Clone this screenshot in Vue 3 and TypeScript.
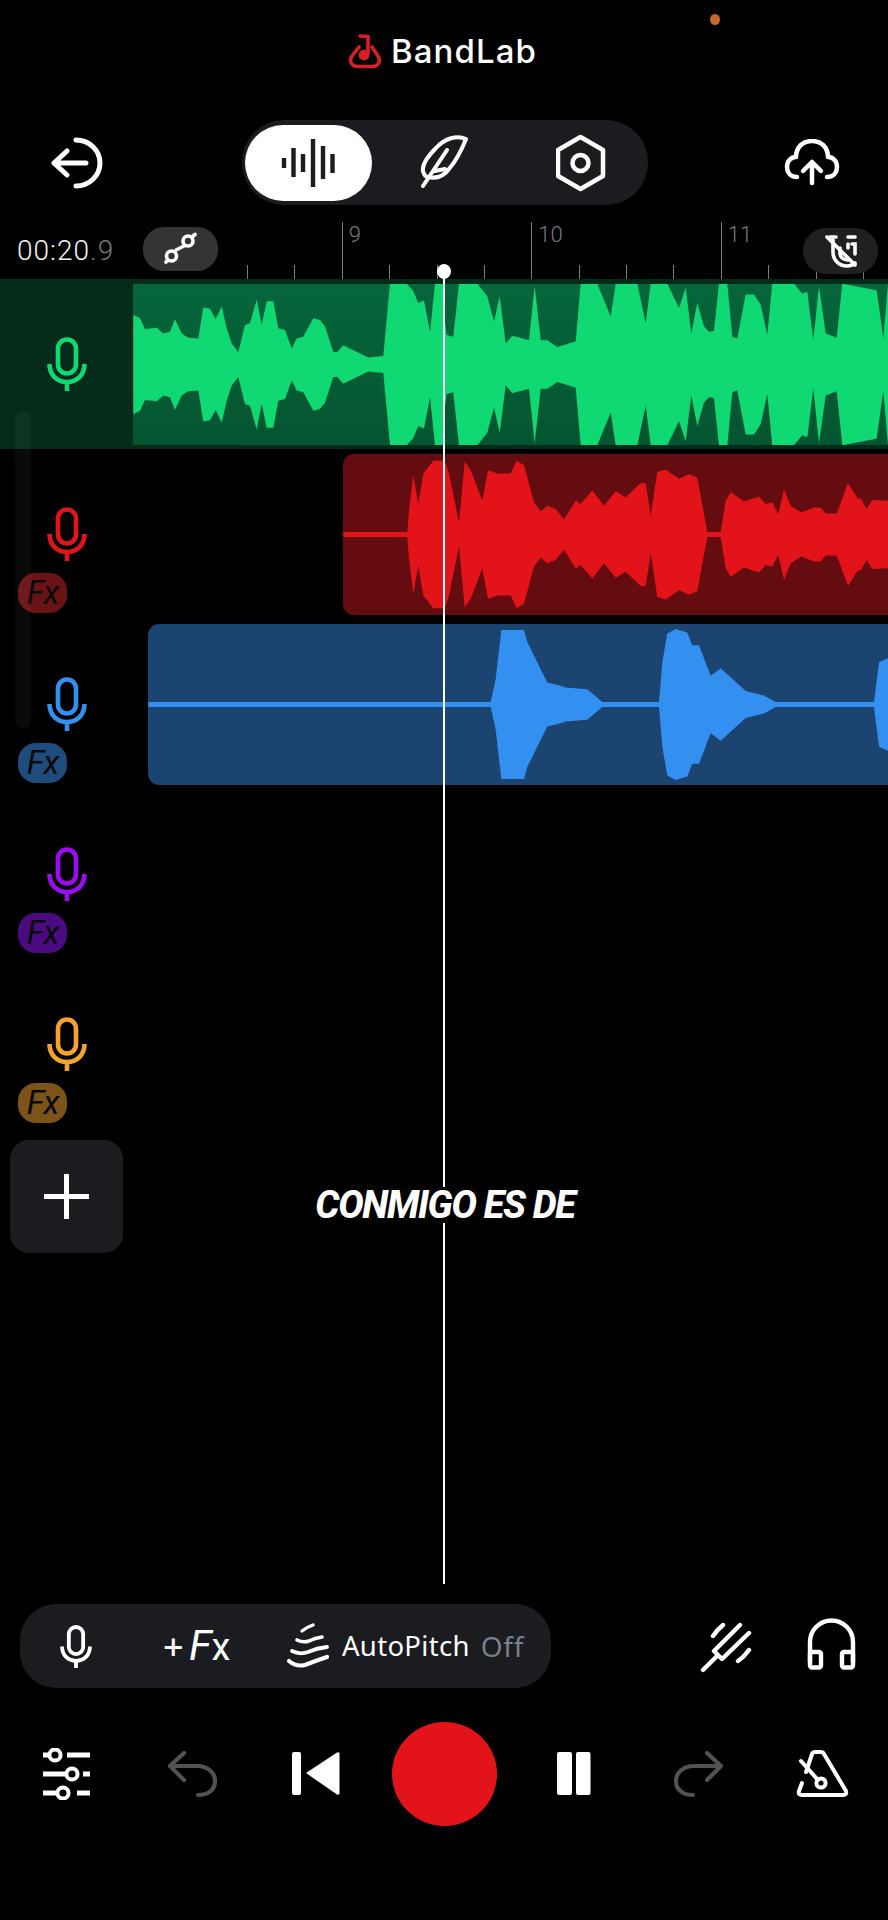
<script setup lang="ts">
type Pt = [number, number]

const K = 2.958

function wave(a: Pt[], b: Pt[], cy: number): string {
  const mid = 80.5
  const pts: [number, number][] = [
    ...a.map(([x, y]): [number, number] => [x / 3, (cy - y) / K]),
    ...b.map(([x, y]): [number, number] => [x / 3 + 444, (cy - y) / K]),
  ]
  const top = pts.map(([x, h]) => `${x.toFixed(1)} ${(mid - h).toFixed(1)}`)
  const bottom = [...pts].reverse().map(([x, h]) => `${x.toFixed(1)} ${(mid + h).toFixed(1)}`)
  return `M${top.join('L')}L${bottom.join('L')}Z`
}

const greenA: Pt[] = [[400,130],[420,140],[435,172],[470,168],[490,185],[510,180],[525,143],[545,185],[565,198],[595,200],[610,108],[630,112],[647,142],[665,105],[680,170],[695,215],[715,240],[735,160],[750,155],[770,85],[785,160],[800,90],[820,90],[835,170],[855,175],[875,230],[890,200],[910,195],[940,140],[960,145],[975,165],[1000,240],[1012,240],[1030,220],[1060,235],[1105,256],[1150,252],[1170,38],[1220,38],[1240,60],[1255,95],[1272,88],[1290,180],[1305,38],[1330,38]]
const greenB: Pt[] = [[0,130],[8,190],[28,195],[45,38],[100,38],[130,75],[150,150],[167,75],[185,215],[205,192],[255,205],[272,45],[290,205],[310,205],[340,225],[365,218],[395,208],[410,38],[460,38],[500,135],[515,38],[580,38],[605,155],[620,38],[670,38],[705,110],[725,50],[742,185],[760,95],[780,165],[795,180],[810,178],[825,38],[850,38],[865,195],[880,200],[905,70],[930,70],[950,100],[970,190],[985,38],[1050,38],[1075,68],[1090,62],[1108,205],[1125,45],[1145,185],[1178,198],[1195,38],[1285,55],[1298,58],[1318,200],[1332,38]]
const redA: Pt[] = [[1030,773],[1222,773],[1228,700],[1240,605],[1255,690],[1270,600],[1300,562],[1330,562]]
const redB: Pt[] = [[0,562],[5,570],[15,600],[45,745],[62,565],[80,590],[115,680],[132,590],[160,600],[200,600],[218,562],[240,575],[270,685],[290,712],[310,695],[335,705],[360,735],[395,680],[410,690],[445,650],[480,695],[515,652],[545,670],[590,628],[605,628],[620,725],[640,595],[665,588],[705,615],[735,602],[760,612],[790,773],[830,773],[845,680],[860,655],[900,682],[945,668],[965,690],[985,685],[1003,720],[1020,645],[1040,695],[1072,715],[1110,700],[1130,700],[1145,718],[1178,718],[1212,628],[1240,672],[1252,675],[1268,705],[1285,678],[1332,680]]
const blueA: Pt[] = [[445,1278],[1330,1278]]
const blueB: Pt[] = [[0,1278],[140,1278],[155,1210],[172,1065],[215,1065],[240,1065],[250,1100],[310,1220],[345,1228],[365,1235],[430,1240],[475,1278],[645,1278],[655,1160],[670,1075],[695,1062],[730,1072],[745,1110],[765,1110],[800,1200],[830,1178],[905,1245],[960,1258],[995,1278],[1290,1278],[1305,1160],[1332,1148]]

interface Track {
  color: string
  fx: string | null
  clip: null | { cls: string; left: number; fill: string; path: string }
}

const tracks: Track[] = [
  { color: '#10d873', fx: null, clip: { cls: 'clip-green', left: 133, fill: '#10d873', path: wave(greenA, greenB, 277) } },
  { color: '#e2141a', fx: '#6a1315', clip: { cls: 'clip-red', left: 343, fill: '#e2141a', path: wave(redA, redB, 780) } },
  { color: '#338ff0', fx: '#1e4c7c', clip: { cls: 'clip-blue', left: 148, fill: '#338ff0', path: wave(blueA, blueB, 1285) } },
  { color: '#9a0df0', fx: '#4a0a80', clip: null },
  { color: '#f5a32a', fx: '#7c5318', clip: null },
]

const ticks = Array.from({ length: 14 }, (_, i) => {
  const major = i % 4 === 2
  const n = 9 + (i - 2) / 4
  return { major, label: major ? String(n) : '' }
})

const bars = [
  { x: 285, y: 157, h: 10 },
  { x: 294.5, y: 147, h: 29 },
  { x: 304, y: 153, h: 18 },
  { x: 314, y: 138, h: 48 },
  { x: 324, y: 145, h: 33 },
  { x: 333.5, y: 153, h: 19 },
]
</script>

<template>
  <div class="app">
    <i class="status-dot"></i>

    <header class="brand">
      <svg class="logo" viewBox="350 33 34 36" fill="none" stroke="#d81f27" stroke-width="3.6" stroke-linecap="round" stroke-linejoin="round">
        <path d="M361 47 L354 56 Q351 61 354 64 Q356 66.500 359 66.500 L375 66.500 Q378 66.500 380 64 Q383 61 380 56 L374 47" />
        <path d="M362 36 L370 36.500 L370 54" />
        <circle cx="366" cy="55" r="3.600" fill="#d81f27" />
      </svg>
      <span class="brand-name">BandLab</span>
    </header>

    <div class="toolbar">
      <svg class="ic-back" viewBox="50 135 53 53" fill="none" stroke="#fff" stroke-width="5" stroke-linecap="round" stroke-linejoin="round">
        <path d="M76 139 A24 23 0 0 1 76 185" />
        <path d="M86 162 H54 M67 150 L54 162 L67 174" />
      </svg>
      <nav class="modes">
        <span class="mode mode-on">
          <svg width="56" height="52" viewBox="282 136 56 52" fill="#1b1c1f">
            <rect v-for="b in bars" :key="b.x" :x="b.x - 2.2" :y="b.y" width="4.400" :height="b.h" />
          </svg>
        </span>
        <span class="mode mode-feather">
          <svg width="56" height="58" viewBox="416 133 56 58" fill="none" stroke="#fff" stroke-width="4" stroke-linecap="round" stroke-linejoin="round">
            <path d="M466 138 C457 134 445 137 436 147 C428 155 422 164 423 170 C424 174 426 176 428 176 C437 178 444 175 449 168 C456 160 462 148 466 138 Z" />
            <path d="M423 185 L447 149 M435 170 L445 168" />
          </svg>
        </span>
        <span class="mode mode-hex">
          <svg width="50" height="58" viewBox="556 133 50 58" fill="none" stroke="#fff" stroke-width="4.500" stroke-linejoin="round">
            <path d="M580.500 136 L603 149 L603 175 L580.500 188 L558 175 L558 149 Z" />
            <circle cx="580.500" cy="162" r="8" />
          </svg>
        </span>
      </nav>
      <svg class="ic-cloud" viewBox="783 137 58 47" fill="none" stroke="#fff" stroke-width="4.500" stroke-linecap="round" stroke-linejoin="round">
        <path d="M797 175 C790 175 787 170 787 165 C787 159 791 155 796 155 C796 145 803 139 812 139 C821 139 828 145 828 155 C833 155 837 159 837 165 C837 170 834 175 827 175" />
        <path d="M812 181 V160 M803 169 L812 160 L821 169" />
      </svg>
    </div>

    <div class="ruler-row">
      <span class="time">00:20<em>.9</em></span>
      <span class="link-btn">
        <svg width="36" height="34" viewBox="165 233 36 34" fill="none" stroke="#fff" stroke-width="3.600" stroke-linecap="round">
          <path d="M168 263 L170 261 M178 251 L186 247 M194 238 L197 235.500" />
          <circle cx="173.500" cy="257" r="5" />
          <circle cx="190" cy="242" r="5" />
        </svg>
      </span>
      <div class="ruler">
        <span v-for="(t, i) in ticks" :key="i" class="tick" :class="{ major: t.major }">
          <b v-if="t.label">{{ t.label }}</b>
        </span>
      </div>
      <span class="magnet-btn">
        <svg width="36" height="36" viewBox="821 231 36 36" fill="none" stroke="#fff" stroke-width="3.600" stroke-linecap="round">
          <path d="M825 235 L853 263" />
          <path d="M831 238 V250 C831 258 837 264 845 264 C848 264 851 263 853 261" />
          <path d="M838 246 V251 C838 255 841 258 846 258" />
          <path d="M846 235 H853 M850 242 H853 V252 M846 242 V246" />
          <path d="M828 235 H834" />
        </svg>
      </span>
    </div>

    <section class="tracks">
      <div v-for="(t, i) in tracks" :key="i" class="track" :class="{ selected: i === 0 }">
        <div class="head">
          <svg class="mic" viewBox="0 0 40 54" fill="none" :stroke="t.color" stroke-width="4.600">
            <rect x="11" y="2.500" width="18" height="34" rx="9" />
            <path d="M2.500 27 C2.500 38 10 45 20 45 C30 45 37.500 38 37.500 27 M20 45 V54" />
          </svg>
          <span v-if="t.fx" class="fx" :style="{ background: t.fx }">Fx</span>
        </div>
        <div v-if="t.clip" class="lane">
          <div class="clip" :class="t.clip.cls">
            <svg class="wave" :viewBox="`${t.clip.left} 0 ${888 - t.clip.left} 161`" preserveAspectRatio="none">
              <path :d="t.clip.path" :fill="t.clip.fill" />
            </svg>
          </div>
        </div>
      </div>
    </section>

    <button class="add" type="button" aria-label="Add track"><i class="plus"></i></button>

    <div class="scrollbar"></div>
    <div class="playhead"></div>
    <div class="caption">CONMIGO ES DE</div>

    <div class="tools">
      <div class="tool-pill">
        <svg class="tool-mic" viewBox="0 0 40 54" fill="none" stroke="#fff" stroke-width="4.800">
          <rect x="11" y="2.500" width="18" height="34" rx="9" />
          <path d="M2.500 27 C2.500 38 10 45 20 45 C30 45 37.500 38 37.500 27 M20 45 V54" />
        </svg>
        <span class="add-fx"><span class="p">+</span><span class="f">F</span><span class="x">x</span></span>
        <svg class="ic-auto" viewBox="286 1622 44 48" fill="none" stroke="#fff" stroke-linecap="round">
          <path stroke-width="3.400" d="M302 1631 Q307 1627 313 1625" />
          <path stroke-width="3.600" d="M297 1640 Q303 1643 309 1641 Q315 1638 322 1637" />
          <path stroke-width="3.800" d="M292 1651 Q300 1655 308 1652 Q317 1648 327 1647" />
          <path stroke-width="4.200" d="M289 1661 Q296 1667 305 1665 Q315 1661 327 1657" />
        </svg>
        <span class="auto-label">AutoPitch</span>
        <span class="auto-state">Off</span>
      </div>
      <svg class="ic-fork" viewBox="700 1622 52 52" fill="none" stroke="#fff" stroke-width="4.400" stroke-linecap="round" stroke-linejoin="round">
        <path d="M703 1670 L717 1656 M740 1625 L714 1651 L722 1659 L749 1633" />
        <path d="M713 1636 Q717 1630 723 1625 M738 1661 Q744 1657 749 1650" />
      </svg>
      <svg class="ic-phones" viewBox="806 1618 51 52" fill="none" stroke="#fff" stroke-width="4.400" stroke-linejoin="round">
        <path d="M810 1662 V1642 A21.500 21.500 0 0 1 853 1642 V1662" />
        <rect x="810" y="1652" width="11" height="15.500" rx="2" />
        <rect x="842" y="1652" width="11" height="15.500" rx="2" />
      </svg>
    </div>

    <div class="transport">
      <svg class="ic-mix" viewBox="41 1748 52 52" fill="none" stroke="#fff" stroke-width="4.800">
        <path d="M43 1755 H49 M67 1755 H90 M43 1774 H66 M83 1774 H90 M43 1793 H57 M77 1793 H90" />
        <circle cx="55" cy="1755" r="5.600" stroke-width="4" />
        <circle cx="72" cy="1774" r="5.600" stroke-width="4" />
        <circle cx="63" cy="1793" r="5.600" stroke-width="4" />
      </svg>
      <svg class="ic-undo" viewBox="167 1751 50 48" fill="none" stroke="#525252" stroke-width="4.200" stroke-linecap="round" stroke-linejoin="round">
        <path d="M184 1754 L170 1767 L184 1781 M170 1767 H197 C208 1767 215 1774 215 1782 C215 1791 208 1796 198 1796" />
      </svg>
      <svg class="ic-prev" viewBox="290 1750 52 48" fill="#fff">
        <rect x="292" y="1752" width="9" height="43" rx="2" />
        <path d="M306 1773 L337 1752.500 Q339.500 1751.500 339.500 1754 V1793 Q339.500 1795.500 337 1794.500 Z" />
      </svg>
      <button class="rec" type="button" aria-label="Record"></button>
      <svg class="ic-pause" viewBox="555 1750 37 48" fill="#fff">
        <rect x="557" y="1752" width="15" height="43" rx="2" />
        <rect x="576" y="1752" width="14.500" height="43" rx="2" />
      </svg>
      <svg class="ic-redo" viewBox="167 1751 50 48" fill="none" stroke="#525252" stroke-width="4.200" stroke-linecap="round" stroke-linejoin="round">
        <path d="M184 1754 L170 1767 L184 1781 M170 1767 H197 C208 1767 215 1774 215 1782 C215 1791 208 1796 198 1796" />
      </svg>
      <svg class="ic-metro" viewBox="796 1750 53 49" fill="none" stroke="#fff" stroke-width="4" stroke-linecap="round" stroke-linejoin="round">
        <path d="M806 1772 L812 1754 Q813 1752 815 1752 L821 1752 Q823 1752 824 1754 L846 1791 Q847 1795 843 1795 L802 1795 Q798 1795 799 1791 L802 1783" />
        <path d="M801 1761 L818 1780" />
        <circle cx="821" cy="1783" r="4.600" />
      </svg>
    </div>
  </div>
</template>

<style scoped>
.app {
  position: relative;
  width: 888px;
  height: 1920px;
  overflow: hidden;
  background: #000;
  color: #fff;
  font-family: "Noto Sans", "Liberation Sans", sans-serif;
}
.status-dot {
  position: absolute;
  left: 710px;
  top: 14px;
  width: 10px;
  height: 11px;
  border-radius: 50%;
  background: #c8662c;
}
.brand {
  display: flex;
  align-items: center;
  justify-content: center;
  height: 34px;
  padding: 34px 3px 0 0;
  gap: 9px;
}
.logo { width: 34px; height: 36px; }
.brand-name {
  font-family: Inter, "Noto Sans", sans-serif;
  font-weight: 500;
  font-size: 33px;
  letter-spacing: 1.1px;
  line-height: 34px;
}
.toolbar {
  display: flex;
  align-items: center;
  height: 85px;
  margin-top: 52px;
  padding-left: 50px;
}
.ic-back { width: 53px; height: 53px; }
.modes {
  display: flex;
  align-items: center;
  width: 406px;
  height: 85px;
  margin-left: 139px;
  padding-left: 3px;
  box-sizing: border-box;
  border-radius: 42px;
  background: #1b1c1f;
}
.mode {
  display: flex;
  align-items: center;
  justify-content: center;
  width: 127px;
  height: 76px;
  border-radius: 38px;
  flex: none;
}
.mode-on { background: #fff; }
.mode-feather { width: 144px; }
.mode-hex { width: 130px; }
.ic-cloud { width: 58px; height: 47px; margin-left: 135px; }
.ruler-row {
  position: relative;
  display: flex;
  height: 56.500px;
  margin-top: 17px;
}
.time {
  width: 126px;
  padding: 13px 0 0 17px;
  box-sizing: border-box;
  font-family: Roboto, sans-serif;
  font-weight: 300;
  font-size: 28px;
  line-height: 32px;
  letter-spacing: 1px;
  color: #f4f4f4;
  white-space: nowrap;
}
.time em { font-style: normal; color: #777; }
.link-btn {
  display: flex;
  align-items: center;
  justify-content: center;
  width: 75px;
  height: 44px;
  margin: 5px 0 0 17px;
  border-radius: 21px;
  background: #343436;
  flex: none;
}
.ruler {
  display: flex;
  align-items: flex-end;
  flex: none;
  width: 640px;
  height: 100%;
  margin-left: 29px;
}
.tick {
  position: relative;
  flex: none;
  width: 47.380px;
  height: 14px;
  box-sizing: border-box;
  border-left: 1.500px solid #7c7c7c;
}
.tick.major { height: 100%; }
.tick b {
  position: absolute;
  left: 6px;
  top: 1px;
  font-family: Roboto, sans-serif;
  font-weight: 300;
  font-size: 22px;
  line-height: 24px;
  color: #757a85;
}
.magnet-btn {
  position: absolute;
  left: 803px;
  top: 6px;
  display: flex;
  align-items: center;
  justify-content: center;
  width: 75px;
  height: 46px;
  border-radius: 23px;
  background: #1f2022;
}
.tracks { display: flex; flex-direction: column; }
.track {
  display: flex;
  height: 170px;
}
.track.selected { background: #052c1b; }
.head {
  flex: none;
  width: 133px;
  padding-top: 58px;
  box-sizing: border-box;
}
.mic { display: block; width: 40px; height: 54px; margin-left: 47px; }
.fx {
  display: flex;
  align-items: center;
  justify-content: center;
  width: 49px;
  height: 40px;
  margin: 12px 0 0 18px;
  border-radius: 18px;
  color: #0a0a0a;
  font-family: Roboto, sans-serif;
  font-style: italic;
  font-size: 33px;
  letter-spacing: -1px;
  line-height: 40px;
}
.lane {
  flex: 1;
  min-width: 0;
  padding: 5px 0 4px;
}
.clip {
  height: 161px;
  overflow: hidden;
}
.clip-green { background: linear-gradient(#06663b, #045530); }
.clip-red {
  margin-left: 210px;
  border-radius: 11px 0 0 11px;
  background: #650c10;
}
.clip-blue {
  margin-left: 15px;
  border-radius: 11px 0 0 11px;
  background: #1b4470;
}
.wave { display: block; width: 100%; height: 100%; }
.add {
  position: relative;
  display: block;
  width: 113px;
  height: 113px;
  margin: 11px 0 0 10px;
  padding: 0;
  border: 0;
  border-radius: 19px;
  background: #1b1c1f;
}
.plus {
  position: absolute;
  left: 34px;
  top: 34px;
  width: 45px;
  height: 45px;
  background:
    linear-gradient(#fff, #fff) center / 100% 5px no-repeat,
    linear-gradient(#fff, #fff) center / 5px 100% no-repeat;
}
.scrollbar {
  position: absolute;
  left: 15px;
  top: 412px;
  width: 16px;
  height: 316px;
  border-radius: 8px;
  background: rgba(255, 255, 255, 0.035);
}
.playhead {
  position: absolute;
  left: 443px;
  top: 276px;
  width: 2px;
  height: 1308px;
  background: #fff;
}
.playhead::before {
  content: "";
  position: absolute;
  left: -6px;
  top: -12px;
  width: 14px;
  height: 15px;
  border-radius: 50%;
  background: #fff;
}
.caption {
  position: absolute;
  left: 310px;
  top: 1187px;
  width: 270px;
  height: 36px;
  background: #000;
  font-family: Roboto, sans-serif;
  font-style: italic;
  font-weight: 800;
  font-size: 38px;
  line-height: 36px;
  letter-spacing: -1.3px;
  white-space: nowrap;
  text-align: center;
}
.tools {
  position: absolute;
  left: 20px;
  top: 1604px;
  display: flex;
  align-items: center;
}
.tool-pill {
  display: flex;
  align-items: center;
  width: 531px;
  height: 84px;
  padding-left: 40px;
  box-sizing: border-box;
  border-radius: 36px;
  background: #1b1c1f;
}
.tool-mic { width: 32px; height: 43px; flex: none; }
.add-fx {
  display: flex;
  align-items: baseline;
  margin-left: 71px;
  width: 69px;
  line-height: 40px;
}
.add-fx .p { font-family: "Noto Sans", sans-serif; font-weight: 500; font-size: 36px; width: 26px; }
.add-fx .f { font-family: Roboto, sans-serif; font-style: italic; font-size: 42px; }
.add-fx .x { font-family: Roboto, sans-serif; font-size: 38px; }
.ic-auto { width: 44px; height: 48px; margin-left: 54px; flex: none; }
.auto-label {
  margin-left: 12px;
  font-size: 27.500px;
  letter-spacing: 0.3px;
  line-height: 30px;
}
.auto-state {
  margin-left: 11px;
  font-size: 28px;
  letter-spacing: 0.8px;
  line-height: 30px;
  color: #78808c;
}
.ic-fork { width: 52px; height: 52px; margin-left: 149px; margin-top: 4px; }
.ic-phones { width: 51px; height: 52px; margin-left: 54px; margin-top: -4px; }
.transport {
  position: absolute;
  left: 41px;
  top: 1722px;
  display: flex;
  align-items: center;
  height: 104px;
}
.ic-mix { width: 52px; height: 52px; }
.ic-undo { width: 50px; height: 48px; margin-left: 74px; }
.ic-prev { width: 52px; height: 48px; margin-left: 73px; }
.rec {
  width: 105px;
  height: 104px;
  margin-left: 50px;
  padding: 0;
  border: 0;
  border-radius: 50%;
  background: #e2141a;
}
.ic-pause { width: 37px; height: 48px; margin-left: 58px; }
.ic-redo { width: 50px; height: 48px; margin-left: 82px; transform: scaleX(-1); }
.ic-metro { width: 53px; height: 49px; margin-left: 72px; }
</style>
